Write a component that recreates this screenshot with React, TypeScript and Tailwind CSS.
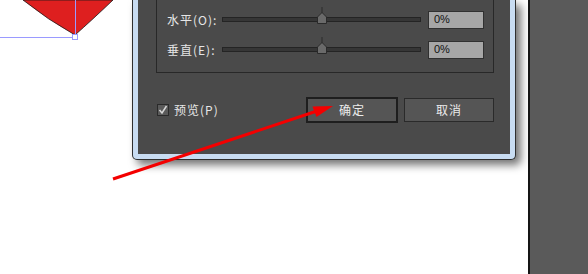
const cjk = { fontFamily: '"Noto Sans CJK SC", "Liberation Sans", sans-serif' }

function SliderRow({ label }: { label: string }) {
  return (
    <div className="flex h-[17px] items-center">
      <span className="w-[55px] shrink-0 text-[12px] leading-none tracking-[1px] text-[#e6e6e6]" style={cjk}>
        {label}
      </span>
      <div className="relative h-[5px] w-[199px] shrink-0 border border-[#242424] bg-[#363636]">
        <svg
          className="absolute left-[93px] top-[-11px]"
          width="12"
          height="18"
          viewBox="0 0 12 18"
        >
          <line x1="6" y1="0" x2="6" y2="6" stroke="#2a2a2a" strokeWidth="1" />
          <path d="M1.5 10 L6 5.5 L10.5 10 L10.5 16.5 L1.5 16.5 Z" fill="#6a6a6a" stroke="#2a2a2a" strokeWidth="1" />
        </svg>
      </div>
      <div
        className="ml-[7px] flex h-[18px] w-[56px] shrink-0 items-center border border-[#303030] bg-[#a6a6a6] pl-[5px] text-[11px] text-[#111]"
        style={{ fontFamily: '"Liberation Sans", sans-serif' }}
      >
        0%
      </div>
    </div>
  )
}

export default function App() {
  return (
    <div className="relative flex h-[274px] w-[588px] overflow-hidden bg-white">
      {/* artboard with the red shape */}
      <div className="w-[132px] shrink-0">
        <svg width="132" height="50" viewBox="0 0 132 50">
          <path d="M23 0 Q48 20 75 35 Q92 20 113 0 Z" fill="#de1f1f" stroke="#1a1a1a" strokeWidth="0.8" />
          <line x1="75.5" y1="0" x2="75.5" y2="34" stroke="#9a9aff" strokeWidth="1" />
          <line x1="0" y1="37.5" x2="72" y2="37.5" stroke="#9a9aff" strokeWidth="1" />
          <rect x="72.5" y="34.5" width="5" height="5" fill="white" stroke="#9a9aff" strokeWidth="1" />
        </svg>
      </div>

      {/* dialog */}
      <div className="h-[160px] w-[384px] shrink-0 rounded-b-[5px] border border-t-0 border-[#2f2f2f] bg-[#c8dcf2] px-[5px] pb-[5px] shadow-[5px_5px_9px_rgba(0,0,0,0.55)]">
        <div className="h-full bg-[#4a4a4a]">
          <div className="ml-[18px] flex w-[338px] flex-col gap-[13px] border-x border-b border-[#282828] pb-[14px] pl-[10px] pt-[11px]">
            <SliderRow label="水平(O):" />
            <SliderRow label="垂直(E):" />
          </div>
          <div className="mt-[24px] flex h-[26px] items-center justify-between pl-[19px] pr-[16px]">
            <div className="flex items-center gap-[5px]">
              <div className="flex h-[12px] w-[12px] items-center justify-center border border-[#2a2a2a] bg-[#5a5a5a]">
                <svg width="10" height="10" viewBox="0 0 10 10">
                  <path d="M1.5 5 L4 8 L8.5 1" fill="none" stroke="#d8d8d8" strokeWidth="1.5" />
                </svg>
              </div>
              <span className="text-[12px] leading-none tracking-[1px] text-[#e6e6e6]" style={cjk}>
                预览(P)
              </span>
            </div>
            <div className="flex items-center gap-[6px]">
              <button className="flex h-[26px] w-[92px] items-center justify-center border-2 border-[#1e1e1e] bg-[#555555] text-[12px] tracking-[1px] text-[#ececec]" style={cjk}>
                确定
              </button>
              <button className="flex h-[24px] w-[90px] items-center justify-center border border-[#2a2a2a] bg-[#555555] text-[12px] tracking-[1px] text-[#ececec]" style={cjk}>
                取消
              </button>
            </div>
          </div>
        </div>
      </div>

      <div className="w-[12px] shrink-0" />
      <div className="flex-1 border-l-2 border-[#151515] bg-[#5a5a5a]" />

      {/* annotation arrow */}
      <svg className="absolute left-0 top-0" width="588" height="274" viewBox="0 0 588 274">
        <line x1="113" y1="179" x2="317" y2="111" stroke="#f40000" strokeWidth="3" />
        <polygon points="333,106 316.5,117 312.5,106.5" fill="#f40000" />
      </svg>
    </div>
  )
}
